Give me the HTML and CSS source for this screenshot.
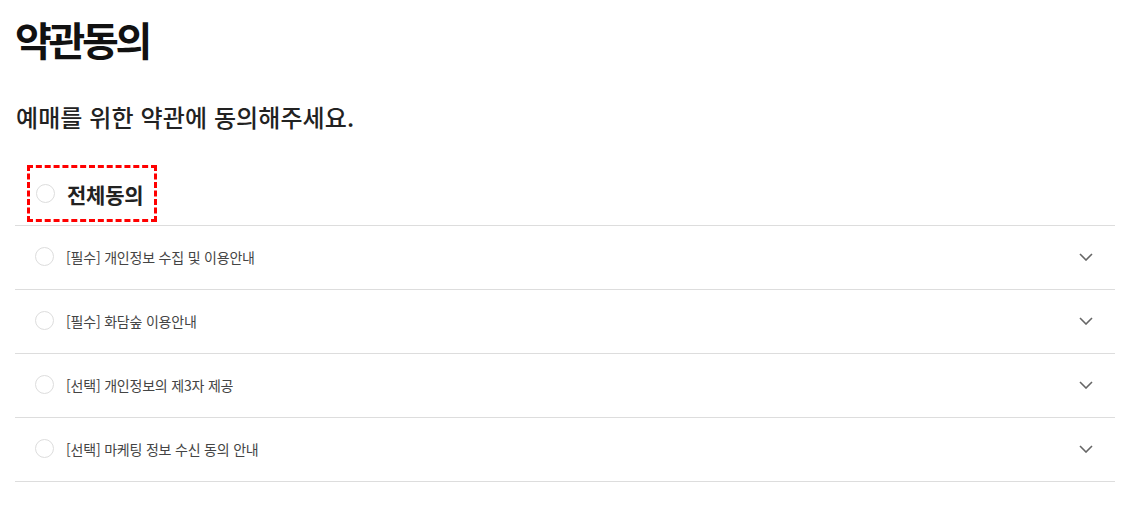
FILE: index.html
```html
<!DOCTYPE html>
<html lang="ko">
<head>
    <meta charset="UTF-8">
    <meta name="viewport" content="width=device-width, initial-scale=1.0">
    <title>약관동의</title>
    <link rel="stylesheet" href="styles.css">
</head>
<body>

<div class="terms">
    <h1 class="terms-title">약관동의</h1>
    <p class="terms-desc">예매를 위한 약관에 동의해주세요.</p>

    <!-- 전체동의 -->
    <div class="agree-all">
        <label class="agree-all-label">
            <span class="check-circle"></span>
            <span class="agree-all-text">전체동의</span>
        </label>
    </div>

    <ul class="term-list">
        <li class="term-item">
            <span class="check-circle"></span>
            <span class="term-text">[필수] 개인정보 수집 및 이용안내</span>
            <svg class="term-arrow" width="14" height="8" viewBox="0 0 14 8"><path d="M1 1l6 6 6-6" fill="none" stroke="#666" stroke-width="1.6"/></svg>
        </li>
        <li class="term-item">
            <span class="check-circle"></span>
            <span class="term-text">[필수] 화담숲 이용안내</span>
            <svg class="term-arrow" width="14" height="8" viewBox="0 0 14 8"><path d="M1 1l6 6 6-6" fill="none" stroke="#666" stroke-width="1.6"/></svg>
        </li>
        <li class="term-item">
            <span class="check-circle"></span>
            <span class="term-text">[선택] 개인정보의 제3자 제공</span>
            <svg class="term-arrow" width="14" height="8" viewBox="0 0 14 8"><path d="M1 1l6 6 6-6" fill="none" stroke="#666" stroke-width="1.6"/></svg>
        </li>
        <li class="term-item">
            <span class="check-circle"></span>
            <span class="term-text">[선택] 마케팅 정보 수신 동의 안내</span>
            <svg class="term-arrow" width="14" height="8" viewBox="0 0 14 8"><path d="M1 1l6 6 6-6" fill="none" stroke="#666" stroke-width="1.6"/></svg>
        </li>
    </ul>
</div>

</body>
</html>
```

FILE: styles.css
```css
/* 약관동의 화면 */
body {
    font-family: "Noto Sans CJK KR", "Noto Sans", sans-serif;
    background-color: #fff;
    color: #222;
    margin: 0;
    padding: 0;
}
.terms {
    width: 1100px;
    padding: 0 12px 0 15px;
}
.terms-title {
    font-size: 40px;
    font-weight: 700;
    letter-spacing: -3.3px;
    line-height: 1;
    color: #111;
    margin: 0;
    padding-top: 19px;
}
.terms-desc {
    font-size: 24px;
    font-weight: 500;
    letter-spacing: 0.1px;
    line-height: 1;
    color: #222;
    margin: 46px 0 0 1px;
}
.agree-all {
    padding: 39px 0 6px 15px;
    border-bottom: 1px solid #ddd;
}
.agree-all-label {
    display: inline-flex;
    align-items: center;
    height: 51px;
    padding: 0 11px 0 6px;
    outline: 3px dashed #f00;
    cursor: pointer;
}
.agree-all-text {
    font-size: 21px;
    font-weight: 700;
    letter-spacing: -0.2px;
    color: #222;
    margin-left: 12px;
}
.check-circle {
    display: inline-block;
    width: 17px;
    height: 17px;
    border: 1px solid #ddd;
    border-radius: 50%;
    flex-shrink: 0;
}
.term-list {
    list-style: none;
    margin: 0;
    padding: 0;
}
.term-item {
    display: flex;
    align-items: center;
    height: 61px;
    padding: 0 22px 2px 20px;
    border-bottom: 1px solid #ddd;
}
.term-text {
    flex: 1;
    font-size: 14px;
    letter-spacing: -0.2px;
    color: #444;
    margin-left: 12px;
}
.term-arrow {
    flex-shrink: 0;
}
```
